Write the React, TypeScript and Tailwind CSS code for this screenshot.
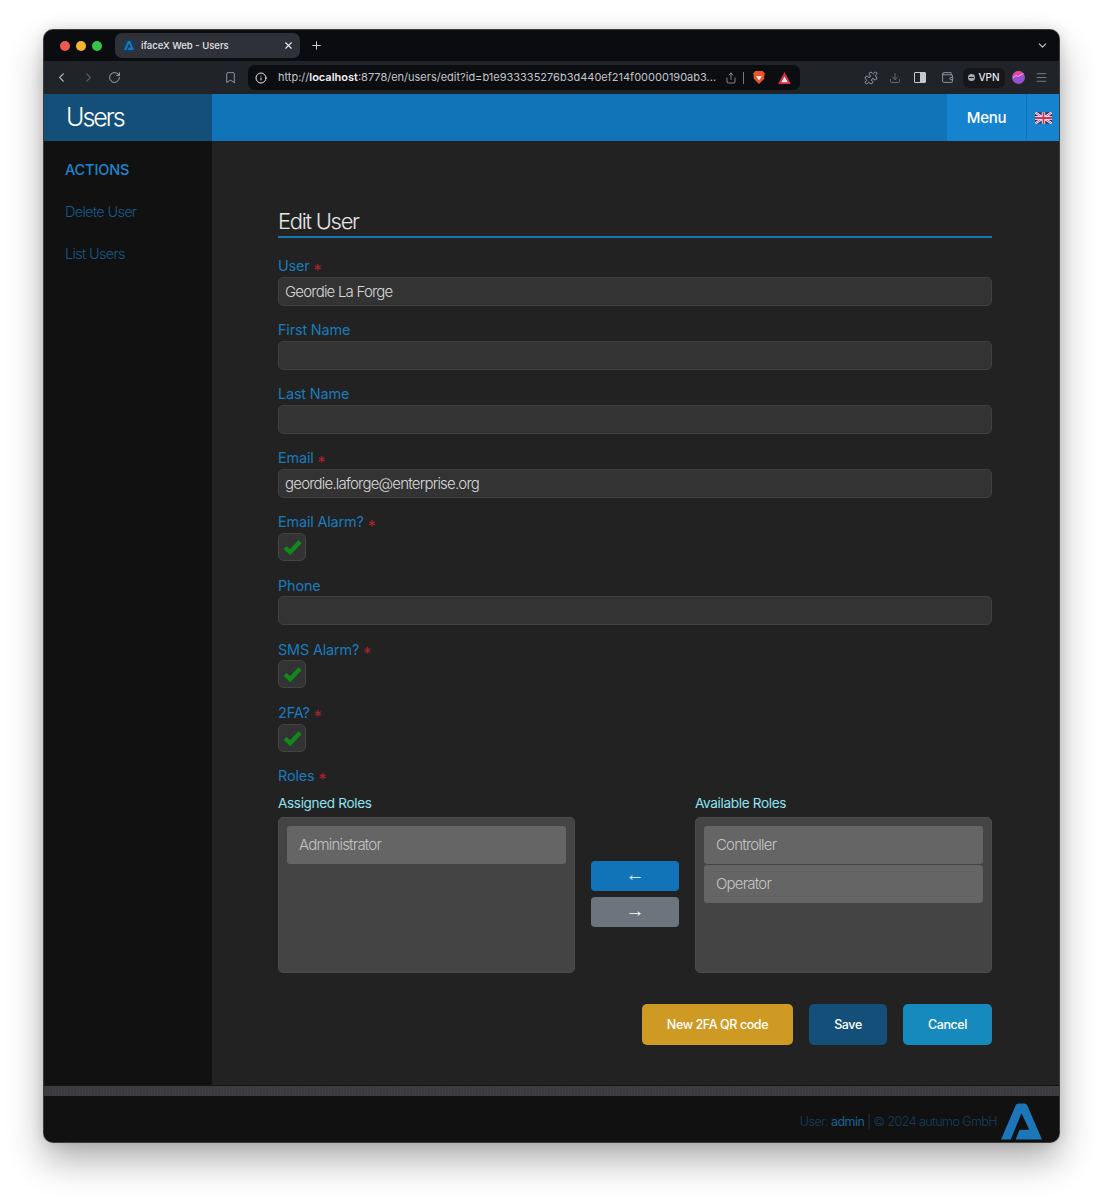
import type { ReactNode } from 'react'
import {
  Bookmark,
  ChevronDown,
  ChevronLeft,
  ChevronRight,
  Download,
  Info,
  Menu,
  Plus,
  Puzzle,
  RotateCw,
  Share,
  Wallet,
  X,
} from 'lucide-react'

function Logo({ className = '' }: { className?: string }) {
  return (
    <svg viewBox="0 0 42 37" className={className} aria-hidden>
      <path fill="#1c76b8" d="M15 2Q16 0 18 0H24Q26 0 27 2L42 37H15L19 27H29L21 10 10 37H0Z" />
    </svg>
  )
}

function UkFlag() {
  return (
    <svg viewBox="0 0 18 12" className="h-[12px] w-[17px]" aria-hidden>
      <rect width="18" height="12" fill="#27307a" />
      <path d="M0 0l18 12M18 0L0 12" stroke="#fff" strokeWidth="2.4" />
      <path d="M0 0l18 12M18 0L0 12" stroke="#d0344f" strokeWidth="0.9" />
      <path d="M9 0v12M0 6h18" stroke="#fff" strokeWidth="3.6" />
      <path d="M9 0v12M0 6h18" stroke="#d0344f" strokeWidth="2" />
    </svg>
  )
}

function BrowserChrome() {
  return (
    <>
      <div className="flex h-[31px] items-center bg-[#0b0c10] pl-[16px] pr-[10px]">
        <span className="h-[10px] w-[10px] rounded-full bg-[#ee5a52]" />
        <span className="ml-[6px] h-[10px] w-[10px] rounded-full bg-[#f5b52f]" />
        <span className="ml-[6px] h-[10px] w-[10px] rounded-full bg-[#35c749]" />
        <div className="ml-[13px] flex h-[25px] w-[185px] items-center rounded-[7px] bg-[#2e3238] pl-[8px] pr-[6px]">
          <span className="flex h-[12px] w-[12px] items-center justify-center bg-[#173a57]">
            <Logo className="h-[9px] w-[10px]" />
          </span>
          <span className="ml-[6px] flex-1 pt-px text-[9.500px] font-medium text-[#e4e6e9]">ifaceX Web - Users</span>
          <X className="h-[11px] w-[11px] text-[#e4e6e9]" strokeWidth={2.5} />
        </div>
        <Plus className="ml-[10px] h-[13px] w-[13px] text-[#d5d7da]" strokeWidth={1.75} />
        <ChevronDown className="ml-auto h-[13px] w-[13px] text-[#c9cbcf]" strokeWidth={2} />
      </div>

      <div className="flex h-[33px] items-center bg-[#202328] pl-[10px] pr-[9px]">
        <ChevronLeft className="h-[15px] w-[15px] text-[#a9adb3]" strokeWidth={1.75} />
        <ChevronRight className="ml-[12px] h-[15px] w-[15px] text-[#565a60]" strokeWidth={1.75} />
        <RotateCw className="ml-[12px] h-[13px] w-[13px] text-[#a9adb3]" strokeWidth={1.75} />
        <Bookmark className="ml-[103px] h-[13px] w-[13px] text-[#a9adb3]" strokeWidth={1.5} />
        <div className="ml-[11px] flex h-[25px] w-[552px] items-center rounded-[7px] bg-[#0c0d11] pl-[7px] pr-[7px]">
          <Info className="h-[12px] w-[12px] text-[#e8e9eb]" strokeWidth={2} />
          <span className="ml-[11px] w-[439px] truncate text-[11px] text-[#c2c5c9]">
            http://<span className="font-semibold text-[#f0f1f2]">localhost</span>:8778/en/users/edit?id=b1e933335276b3d440ef214f00000190ab3...
          </span>
          <Share className="ml-[8px] h-[12px] w-[12px] text-[#a9adb3]" strokeWidth={1.5} />
          <span className="ml-[6px] h-[12px] w-px bg-[#777b81]" />
          <svg viewBox="0 0 14 16" className="ml-[8px] h-[15px] w-[14px]" aria-hidden>
            <path fill="#e8552b" d="M3 1h8l2 2.500-.6 6L7 15 1.600 9.500 1 3.500z" />
            <path fill="#fff" d="M4 6l3 1 3-1-1.500 3L7 11 5.500 9z" />
          </svg>
          <svg viewBox="0 0 14 13" className="ml-[12px] h-[12px] w-[13px]" aria-hidden>
            <path fill="#d92f45" d="M7 0l7 13H0z" />
            <path fill="#f2eef0" d="M7 5l3.500 6h-7z" />
          </svg>
        </div>
        <Puzzle className="ml-[64px] h-[14px] w-[14px] text-[#a9adb3]" strokeWidth={1.5} />
        <Download className="ml-[11px] h-[12px] w-[12px] text-[#7c8086]" strokeWidth={1.5} />
        <span className="ml-[13px] flex h-[11px] w-[12px] justify-end rounded-[1px] border border-[#c6c8cc]">
          <span className="h-full w-[5px] bg-[#c6c8cc]" />
        </span>
        <Wallet className="ml-[15px] h-[13px] w-[13px] text-[#a9adb3]" strokeWidth={1.5} />
        <div className="ml-[9px] flex h-[20px] w-[42px] items-center justify-center rounded-[6px] bg-[#15171b]">
          <span className="flex h-[7px] w-[7px] items-center justify-center rounded-full bg-[#a9adb3]">
            <span className="h-px w-[5px] bg-[#15171b]" />
          </span>
          <span className="ml-[3px] text-[10px] font-medium text-[#e4e6e9]">VPN</span>
        </div>
        <svg viewBox="0 0 13 13" className="ml-[7px] h-[13px] w-[13px]" aria-hidden>
          <circle cx="6.500" cy="6.500" r="6.500" fill="#9a4fd0" />
          <path d="M0.500 4.500A6.500 6.500 0 0 1 10 1L11 2.500 6 5.500 4 4.500 1 6.500z" fill="#e2479a" />
          <path d="M1 7l3-2.500 2 1L11.500 2.500" stroke="#f3d7e6" strokeWidth="0.7" fill="none" />
        </svg>
        <Menu className="ml-[10px] h-[13px] w-[13px] text-[#8a8e94]" strokeWidth={1.5} />
      </div>
    </>
  )
}

function Label({ children, required = false }: { children: ReactNode; required?: boolean }) {
  return (
    <div className="flex h-[23px] items-center pt-[2px] text-[14.400px] leading-none tracking-[-0.15px] text-[#1b7bbd]">
      {children}
      {required && <span className="ml-[4px] mt-[6px] text-[16px] leading-none text-[#b0232e]">*</span>}
    </div>
  )
}

function TextField({ label, value, required }: { label: string; value?: string; required?: boolean }) {
  return (
    <div className="mb-[12px]">
      <Label required={required}>{label}</Label>
      <div className="flex h-[29px] items-center rounded-[5px] border border-[#404040] bg-[#333333] px-[6px] pt-[2px] text-[15px] font-light tracking-[-0.8px] text-[#d8d8d8]">
        {value}
      </div>
    </div>
  )
}

function CheckField({ label }: { label: string }) {
  return (
    <div className="mb-[12.300px]">
      <Label required>{label}</Label>
      <div className="flex h-[28px] w-[28px] items-center justify-center rounded-[6px] border border-[#454545] bg-[#333333]">
        <svg viewBox="0 0 20 17" className="h-[16px] w-[19px]" aria-hidden>
          <path d="M2 9L7.500 14 18 3" fill="none" stroke="#118a1c" strokeWidth="4.500" />
        </svg>
      </div>
    </div>
  )
}

function RoleBox({ title, roles }: { title: string; roles: string[] }) {
  return (
    <div className="w-[297px]">
      <div className="mb-[4px] flex h-[20px] items-center text-[13.600px] font-normal tracking-[-0.35px] text-[#8fe3f2]">{title}</div>
      <div className="h-[156px] rounded-[5px] border border-[#4c4c4c] bg-[#444444] px-[8px] py-[8px]">
        {roles.map((role) => (
          <div
            key={role}
            className="mb-px flex h-[38px] items-center rounded-[3px] bg-[#656565] px-[12px] pt-[1px] text-[15px] font-light tracking-[-0.8px] text-[#c4c4c4]"
          >
            {role}
          </div>
        ))}
      </div>
    </div>
  )
}

export default function App() {
  return (
    <div className="h-[1200px] w-[1104px] overflow-hidden bg-white pl-[44px] pt-[30px] font-['Inter',sans-serif]">
      <div className="flex h-[1112px] w-[1015px] flex-col overflow-hidden rounded-[9px] bg-[#111112] shadow-[0_18px_36px_rgba(0,0,0,0.32),0_0_14px_rgba(0,0,0,0.14)] ring-1 ring-[#3c3c3c]">
        <BrowserChrome />

        <header className="flex h-[47px] shrink-0 bg-[#1274b8] text-white">
          <div className="flex w-[168px] items-center bg-[#134f78] pl-[22px] text-[25px] font-light tracking-[-2px]">
            Users
          </div>
          <div className="ml-auto flex w-[79px] items-center justify-center bg-[#1583ce] pt-px text-[15px] font-medium tracking-[-0.3px]">
            Menu
          </div>
          <div className="flex w-[33px] items-center justify-center border-l border-[#1274b8] bg-[#1583ce]">
            <UkFlag />
          </div>
        </header>

        <div className="flex h-[944px] shrink-0">
          <aside className="w-[168px] shrink-0 bg-[#111112] pl-[21px] pt-[19px]">
            <div className="text-[14.500px] font-medium leading-[20px] tracking-[-0.15px] text-[#1b86cf]">ACTIONS</div>
            <div className="mt-[22px] text-[14.500px] font-light leading-[20px] tracking-[-0.7px] text-[#175a87]">Delete User</div>
            <div className="mt-[22px] text-[14.500px] font-light leading-[20px] tracking-[-0.7px] text-[#175a87]">List Users</div>
          </aside>

          <main className="flex-1 bg-[#222222] pl-[66px] pr-[67px] pt-[65px]">
            <h1 className="h-[30px] text-[22px] font-light leading-[30px] tracking-[-1.3px] text-[#e6e6e6]">Edit User</h1>
            <div className="mb-[16.500px] h-[1.500px] bg-[#1a75b5]" />
            <TextField label="User" value="Geordie La Forge" required />
            <TextField label="First Name" />
            <TextField label="Last Name" />
            <TextField label="Email" value="geordie.laforge@enterprise.org" required />
            <CheckField label="Email Alarm?" />
            <TextField label="Phone" />
            <CheckField label="SMS Alarm?" />
            <CheckField label="2FA?" />
            <Label required>Roles</Label>

            <div className="mt-[6px] flex">
              <RoleBox title="Assigned Roles" roles={['Administrator']} />
              <div className="flex flex-1 flex-col items-center gap-[6px] pt-[68px] font-['Liberation_Sans',sans-serif]">
                <button className="flex h-[30px] w-[88px] items-center justify-center rounded-[4px] bg-[#1274b8] pb-[3px] text-[19px] leading-none text-white">←</button>
                <button className="flex h-[30px] w-[88px] items-center justify-center rounded-[4px] bg-[#6c757d] pb-[3px] text-[19px] leading-none text-white">→</button>
              </div>
              <RoleBox title="Available Roles" roles={['Controller', 'Operator']} />
            </div>

            <div className="mt-[31px] flex justify-end gap-[16px] text-[12.500px] font-medium tracking-[-0.4px] text-white">
              <button className="h-[41px] w-[151px] rounded-[5px] bg-[#cf9a24] pt-px">New 2FA QR code</button>
              <button className="h-[41px] w-[78px] rounded-[5px] bg-[#134f78] pt-px">Save</button>
              <button className="h-[41px] w-[89px] rounded-[5px] bg-[#1689bd] pt-px">Cancel</button>
            </div>
          </main>
        </div>

        <div className="h-[11px] shrink-0 border-t border-[#151515] bg-[repeating-linear-gradient(90deg,#3b3b3f_0,#3b3b3f_2px,#404044_2px,#404044_3px)]" />

        <footer className="flex h-[46px] shrink-0 items-start justify-end bg-[#111112] pr-[17px] pt-[7px]">
          <span className="mt-[9px] text-[12.500px] font-light leading-[20px] tracking-[-0.55px] text-[#15405f]">
            User: <span className="font-normal text-[#1b6296]">admin</span> | © 2024 autumo GmbH
          </span>
          <Logo className="ml-[4px] h-[37px] w-[41px]" />
        </footer>
      </div>
    </div>
  )
}
